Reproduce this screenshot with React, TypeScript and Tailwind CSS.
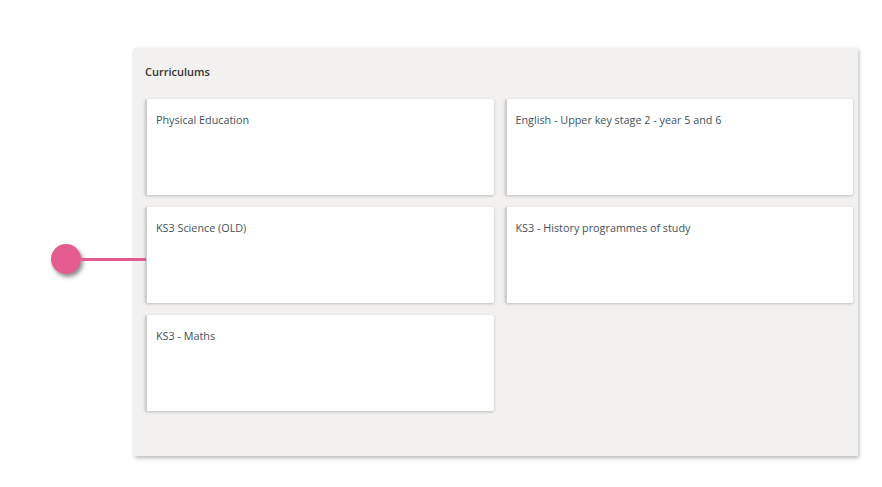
import React from 'react'

const curriculums = [
  'Physical Education',
  'English - Upper key stage 2 - year 5 and 6',
  'KS3 Science (OLD)',
  'KS3 - History programmes of study',
  'KS3 - Maths',
]

function CurriculumCard({ name }: { name: string }) {
  return (
    <div className="h-[96px] rounded-[2px] border-l-2 border-[#cdcdcd] bg-white px-[9px] pt-[13px] shadow-[0_1px_3px_rgba(0,0,0,0.22)]">
      <span className="block text-[10.8px] leading-[16px] text-[#42505e]">{name}</span>
    </div>
  )
}

export default function App() {
  return (
    <div className="relative h-[487px] w-[882px] overflow-hidden bg-white font-['Open_Sans',sans-serif]">
      <div className="ml-[134px] mt-[48px] h-[408px] w-[724px] bg-[#f2f1ef] pl-[11px] pr-[5px] pt-[16px] shadow-[1px_2px_4px_rgba(0,0,0,0.28)]">
        <h2 className="text-[11px] font-semibold leading-[16px] text-[#333]">Curriculums</h2>
        <div className="mt-[19px] grid grid-cols-2 gap-x-[11px] gap-y-[12px]">
          {curriculums.map((c) => (
            <CurriculumCard key={c} name={c} />
          ))}
        </div>
      </div>

      {/* Annotation pin pointing at a card */}
      <div className="absolute left-[51px] top-[244px] flex items-center">
        <div className="h-[30px] w-[30px] rounded-full bg-[#e35b8f] shadow-[2px_3px_4px_rgba(0,0,0,0.45)]" />
        <div className="h-[3px] w-[65px] bg-[#e35b8f]" />
      </div>
    </div>
  )
}
